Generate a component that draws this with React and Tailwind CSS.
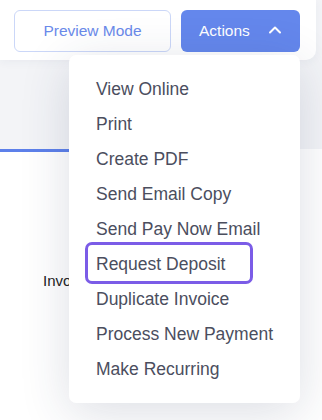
import { ChevronUp } from 'lucide-react'

const items = [
  'View Online',
  'Print',
  'Create PDF',
  'Send Email Copy',
  'Send Pay Now Email',
  'Request Deposit',
  'Duplicate Invoice',
  'Process New Payment',
  'Make Recurring',
]

export default function App() {
  return (
    <div className="relative w-[322px] h-[420px] overflow-hidden bg-[#f3f4f7] font-['Liberation_Sans',Arial,sans-serif]">
      <header className="w-[316px] h-[60px] bg-white rounded-br-[10px] shadow-[0_2px_10px_rgba(40,50,90,0.05)] flex items-start gap-[10px] pl-[14px] pt-[10px]">
        <button className="w-[157px] h-[42px] rounded-[6px] border border-[#cbd7f8] bg-white text-[15.5px] text-[#6a8aea]">
          Preview Mode
        </button>
        <button className="w-[119px] h-[42px] rounded-[6px] bg-[#6487ec] text-white text-[15.5px] flex items-center pl-[18px]">
          <span>Actions</span>
          <ChevronUp size={20} strokeWidth={2.4} className="ml-[15px] mt-[-2px]" />
        </button>
      </header>

      <div className="h-[89px]" />
      <div className="flex bg-white">
        <div className="w-[140px] h-[3px] bg-[#5d80ea]" />
      </div>

      <div className="bg-white h-[300px] pl-[43px] pt-[119px]">
        <div className="text-[15px] leading-[20px] text-[#222]">Invoice Details</div>
      </div>

      <div className="absolute left-[69px] top-[55px] w-[231px] h-[348px] bg-white rounded-[7px] shadow-[0_10px_50px_rgba(40,50,90,0.16)] py-[17px]">
        {items.map((label) => (
          <div
            key={label}
            className="relative h-[35px] leading-[35px] pl-[27px] text-[17.5px] text-[#4b4e5e] whitespace-nowrap"
          >
            {label}
            {label === 'Request Deposit' && (
              <span className="absolute left-[16px] top-[-5px] w-[168px] h-[42px] rounded-[7px] border-[3px] border-[#7b5ce7]" />
            )}
          </div>
        ))}
      </div>
    </div>
  )
}
